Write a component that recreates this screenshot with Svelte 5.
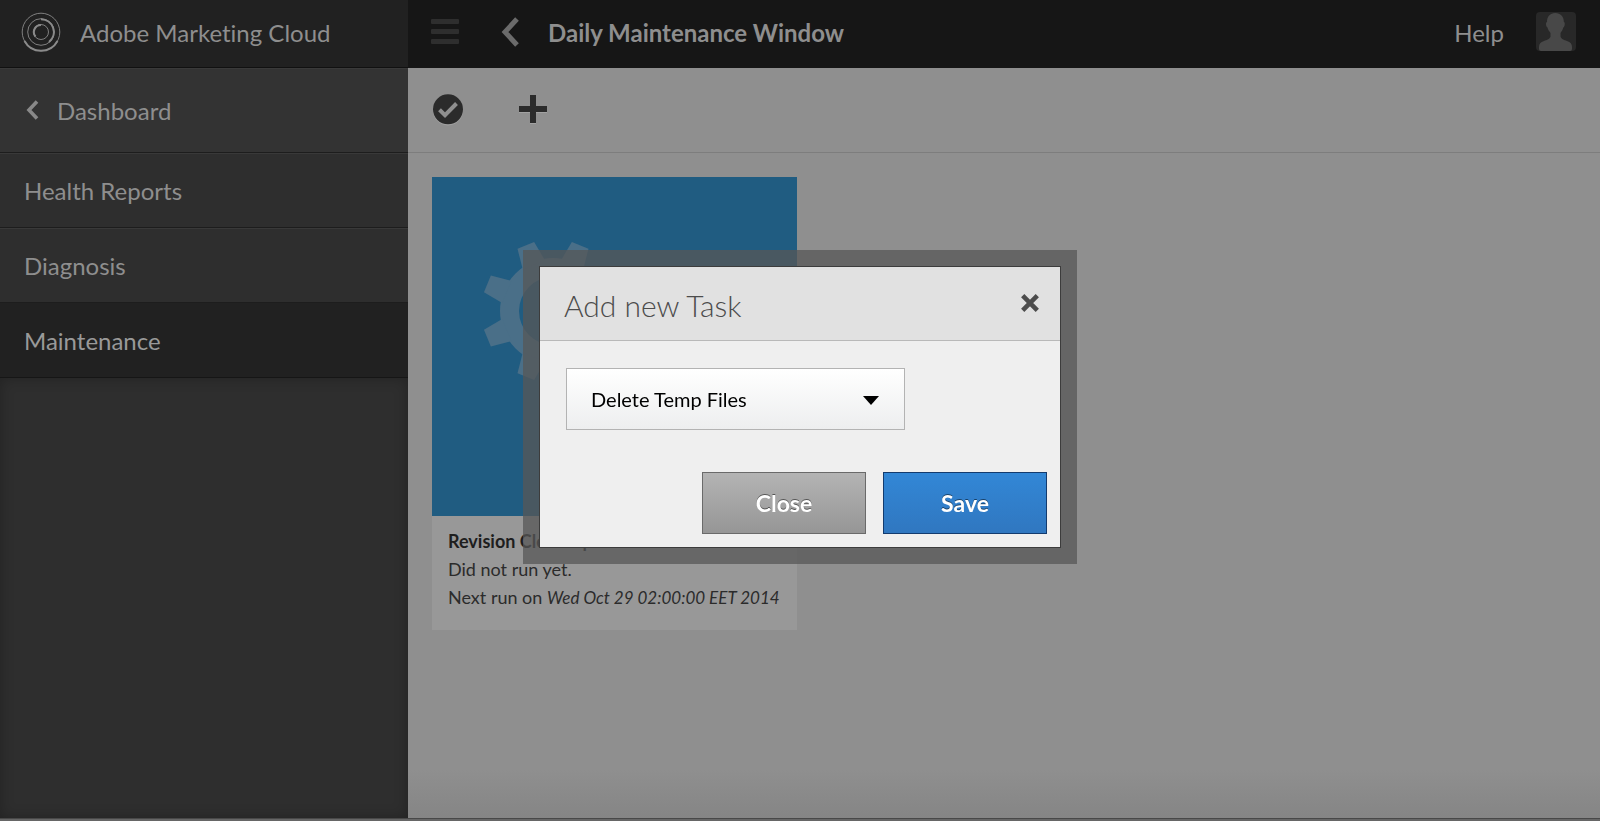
<script>
    const nav = [
        { label: 'Health Reports' },
        { label: 'Diagnosis' },
        { label: 'Maintenance', active: true },
    ];

    const tasks = ['Delete Temp Files', 'Revision Clean Up', 'Workflow Purge'];
    const teeth = [22.5, 67.5, 112.5, 157.5, 202.5, 247.5, 292.5, 337.5];

    let task = $state(tasks[0]);
    let open = $state(true);
</script>

<div class="app">
    <div class="columns">
        <aside class="sidebar">
            <a class="brand" href="#home">
                <svg width="40" height="40" viewBox="0 0 40 40" fill="none" stroke="#8a8a8a">
                    <circle cx="20" cy="20" r="18.8" stroke-width="0.9" />
                    <circle cx="20" cy="20" r="13.3" stroke-width="0.9" />
                    <circle cx="20" cy="20" r="7.5" stroke-width="0.9" />
                    <path d="M3.5 29A18.8 18.8 0 0 0 36.5 29" stroke-width="2" />
                    <path d="M20 7.2A12.8 12.8 0 0 1 28 30" stroke-width="2" />
                    <path d="M20 12.9A7.1 7.1 0 0 0 14.5 24.5" stroke-width="2" />
                </svg>
                <span>Adobe Marketing Cloud</span>
            </a>
            <a class="back" href="#dashboard">
                <svg width="13" height="20" viewBox="0 0 13 20" fill="none" stroke="#898989" stroke-width="3.6">
                    <path d="M11 1.5L3 10l8 8.500" />
                </svg>
                <span>Dashboard</span>
            </a>
            <nav>
                {#each nav as item}
                    <a href="#{item.label}" class:active={item.active}>{item.label}</a>
                {/each}
            </nav>
            <div class="rest"></div>
        </aside>

        <div class="main">
            <header>
                <button class="icon menu" aria-label="Menu">
                    <svg width="28" height="26" viewBox="0 0 28 26" fill="#2e2e2e">
                        <rect y="0" width="28" height="5" rx="1" />
                        <rect y="10" width="28" height="5" rx="1" />
                        <rect y="20" width="28" height="5" rx="1" />
                    </svg>
                </button>
                <button class="icon prev" aria-label="Back">
                    <svg width="18" height="30" viewBox="0 0 18 30" fill="none" stroke="#6b6b6b" stroke-width="5">
                        <path d="M16 2L4 15l12 13" />
                    </svg>
                </button>
                <h1>Daily Maintenance Window</h1>
                <a class="help" href="#help">Help</a>
                <button class="icon" aria-label="User">
                    <svg width="40" height="40" viewBox="0 0 40 40">
                        <rect width="40" height="39" rx="4" fill="#282828" />
                        <path fill="#484848" d="M19.300 1C24.500 1 27.800 4.500 27.900 10C29.300 10.300 29 14.500 27.300 15.500C26.700 18 25.500 19.500 24.500 21V24.500C25 27 28 28 31 29C34.500 30 36 32 36 35V37Q36 39 34 39H5Q3 39 3 37V35C3 32 4.500 30 8 29C11 28 14 27 14.500 24.500V21C13.500 19.500 12 18 11.500 15.500C9.800 14.500 9.500 10.300 11 10C11 4.500 14 1 19.300 1Z" />
                    </svg>
                </button>
            </header>

            <div class="toolbar">
                <button class="icon" aria-label="Select">
                    <svg width="30" height="32" viewBox="0 0 30 32">
                        <circle cx="15" cy="16.500" r="15" fill="#a2a2a2" />
                        <circle cx="15" cy="15.300" r="15" fill="#2b2b2b" />
                        <path d="M6.500 15.800L12 21.200L23.500 9.500" fill="none" stroke="#8f8f8f" stroke-width="4" />
                    </svg>
                </button>
                <button class="icon" aria-label="Add">
                    <svg width="28" height="30" viewBox="0 0 28 30">
                        <path d="M11 1h6v11h11v6H17v11h-6V18H0v-6h11z" fill="#a2a2a2" />
                        <path d="M11 0h6v11h11v6H17v11h-6V17H0v-6h11z" fill="#2b2b2b" />
                    </svg>
                </button>
            </div>

            <div class="content">
                <article class="card">
                    <div class="cover">
                        <svg width="144" height="144" viewBox="-72 -72 144 144" fill="#4a6f88">
                            <path fill-rule="evenodd" d="M-53 0a53 53 0 1 0 106 0a53 53 0 1 0 -106 0zM-34 0a34 34 0 1 0 68 0a34 34 0 1 0 -68 0z" />
                            {#each teeth as deg}
                                <path d="M-9-71H9L12-50H-12z" transform="rotate({deg})" />
                            {/each}
                        </svg>
                    </div>
                    <div class="info">
                        <h2>Revision Clean Up</h2>
                        <p>Did not run yet.</p>
                        <p>Next run on <em>Wed Oct 29 02:00:00 EET 2014</em></p>
                    </div>
                </article>
            </div>
        </div>
    </div>
    <div class="strip"></div>

    {#if open}
        <div class="overlay">
            <div class="modal" role="dialog" aria-labelledby="modal-title">
                <div class="modal-header">
                    <h2 id="modal-title">Add new Task</h2>
                    <button class="icon" aria-label="Dismiss" onclick={() => open = false}>
                        <svg width="18" height="18" viewBox="0 0 18 18" stroke="#4c4c4c" stroke-width="4.600">
                            <path d="M1.700 1.700l14.600 14.600M16.300 1.700L1.700 16.300" />
                        </svg>
                    </button>
                </div>
                <div class="modal-body">
                    <div class="select">
                        <select aria-label="Task" bind:value={task}>
                            {#each tasks as t}
                                <option>{t}</option>
                            {/each}
                        </select>
                        <svg width="16" height="9" viewBox="0 0 16 9"><path d="M0 0h16L8 9z" /></svg>
                    </div>
                </div>
                <div class="modal-footer">
                    <button class="btn" onclick={() => open = false}>Close</button>
                    <button class="btn primary" onclick={() => open = false}>Save</button>
                </div>
            </div>
        </div>
    {/if}
</div>

<style>
    :global(body) {
        margin: 0;
    }

    .app {
        display: flex;
        flex-direction: column;
        min-height: 100vh;
        font-family: Lato, sans-serif;
        font-size: 24px;
        font-variant-ligatures: none;
        color: #8e8e8e;
        background: #8f8f8f;
    }
    .app * {
        box-sizing: border-box;
    }

    h1, h2, p {
        margin: 0;
    }
    a {
        color: inherit;
        text-decoration: none;
    }
    svg {
        display: block;
    }
    .icon {
        padding: 0;
        border: 0;
        background: none;
        cursor: pointer;
    }

    .columns {
        flex: 1;
        display: flex;
    }

    /* left rail */
    .sidebar {
        display: flex;
        flex-direction: column;
        width: 408px;
        flex-shrink: 0;
        background: #2e2e2e;
    }
    .brand {
        display: flex;
        align-items: center;
        gap: 19px;
        height: 68px;
        padding: 0 21px 3px;
        background: #212121;
        border-bottom: 1px solid #111;
    }
    .back {
        display: flex;
        align-items: center;
        gap: 18px;
        height: 85px;
        padding: 0 26px 1px;
        background: #333;
        border-top: 1px solid #3a3a3a;
        border-bottom: 1px solid #1d1d1d;
    }
    nav a {
        display: flex;
        align-items: center;
        height: 75px;
        padding: 0 24px 1px;
        border-top: 1px solid #393939;
        border-bottom: 1px solid #1d1d1d;
    }
    nav a.active {
        color: #999;
        background: #212121;
        border-top-color: #212121;
        border-bottom-color: #161616;
    }
    .rest {
        flex: 1;
        box-shadow: inset 0 0 14px rgba(0, 0, 0, .25);
    }

    /* right side */
    .main {
        flex: 1;
        display: flex;
        flex-direction: column;
    }
    header {
        display: flex;
        align-items: center;
        height: 68px;
        padding: 0 24px 4px 23px;
        background: #161616;
    }
    .prev {
        margin: 0 29px 0 42px;
    }
    h1 {
        flex: 1;
        font-size: 24px;
        font-weight: bold;
    }
    .help {
        margin-right: 32px;
    }

    .toolbar {
        display: flex;
        align-items: center;
        gap: 56px;
        height: 85px;
        padding: 0 25px;
        border-bottom: 1px solid #7d7d7d;
    }

    .content {
        flex: 1;
        padding: 24px;
        background: linear-gradient(to top, #858585, #8f8f8f 48px);
    }
    .card {
        width: 365px;
        background: #989898;
    }
    .cover {
        height: 339px;
        padding: 62px 49px;
        background: #205c81;
    }
    .info {
        height: 114px;
        padding: 11px 16px;
        font-size: 18px;
        line-height: 28px;
        color: #2b2b2b;
        white-space: nowrap;
    }
    .info h2 {
        font-size: 18px;
        color: #1e1e1e;
    }
    .info em {
        font-size: 17px;
    }

    .strip {
        height: 3px;
        background: #666;
        border-top: 1px solid #484848;
    }

    /* dialog */
    .overlay {
        position: fixed;
        inset: 0;
        display: flex;
        align-items: center;
        justify-content: center;
        padding-bottom: 8px;
    }
    .modal {
        width: 522px;
        background: #efefef;
        border: 1px solid #3c3c3c;
        box-shadow: 0 0 0 16px rgba(87, 87, 87, .75);
    }
    .modal-header {
        display: flex;
        align-items: center;
        justify-content: space-between;
        height: 74px;
        padding: 0 21px 0 24px;
        background: #e1e1e1;
        border-bottom: 1px solid #b9b9b9;
        color: #4c4c4c;
    }
    .modal-header h2 {
        padding-top: 3px;
        font-size: 30px;
        font-weight: 300;
    }
    .modal-body {
        padding: 27px 26px 42px;
    }
    .select {
        position: relative;
        width: 339px;
    }
    select {
        appearance: none;
        width: 100%;
        height: 62px;
        padding: 0 24px;
        border: 1px solid #b3b3b3;
        border-radius: 0;
        background: linear-gradient(#fff, #edeeef);
        font: 20px Lato, sans-serif;
        color: #000;
    }
    .select svg {
        position: absolute;
        top: 28px;
        right: 26px;
        pointer-events: none;
    }
    .modal-footer {
        display: flex;
        justify-content: flex-end;
        gap: 17px;
        padding: 0 13px 13px;
    }
    .btn {
        width: 164px;
        height: 62px;
        border: 1px solid #6a6a6a;
        background: linear-gradient(#b4b4b4, #969696);
        font: bold 23px Lato, sans-serif;
        color: #fff;
        text-shadow: 0 -1px 0 rgba(0, 0, 0, .5);
        cursor: pointer;
    }
    .btn.primary {
        border-color: #133b6e;
        background: linear-gradient(#3287d6, #3077c0);
    }
</style>
